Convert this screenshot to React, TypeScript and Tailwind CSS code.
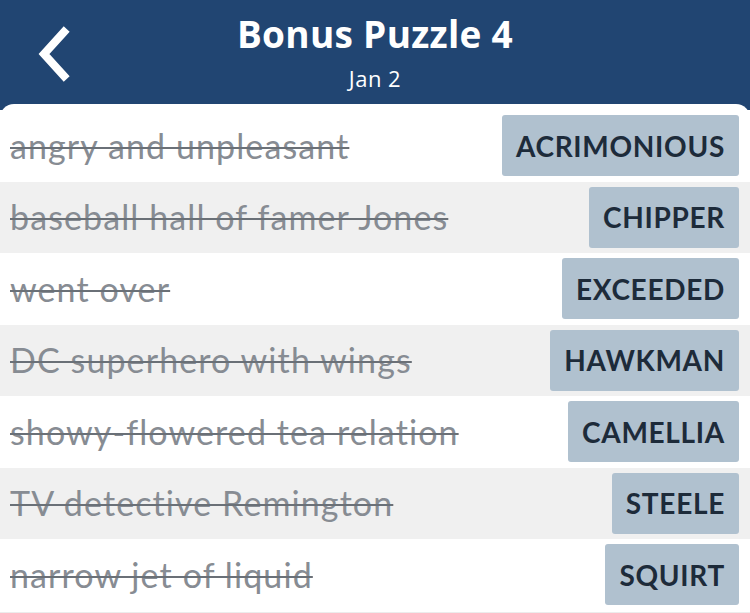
import React from 'react';

interface Clue {
  clue: string;
  answer: string;
}

const clues: Clue[] = [
  { clue: 'angry and unpleasant', answer: 'ACRIMONIOUS' },
  { clue: 'baseball hall of famer Jones', answer: 'CHIPPER' },
  { clue: 'went over', answer: 'EXCEEDED' },
  { clue: 'DC superhero with wings', answer: 'HAWKMAN' },
  { clue: 'showy-flowered tea relation', answer: 'CAMELLIA' },
  { clue: 'TV detective Remington', answer: 'STEELE' },
  { clue: 'narrow jet of liquid', answer: 'SQUIRT' },
];

export default function App() {
  return (
    <div className="w-[750px] h-[613px] overflow-hidden flex flex-col bg-[#214572] font-['Lato',sans-serif]">
      {/* Header */}
      <div className="relative h-[104px] shrink-0 flex flex-col items-center text-white font-['Open_Sans',sans-serif]">
        <button className="absolute left-[34px] top-[26px] w-[40px] h-[56px] flex items-center justify-center">
          <svg width="36" height="56" viewBox="0 0 36 56">
            <polyline points="28,6 8,28 28,50" fill="none" stroke="white" strokeWidth="8" strokeLinecap="square" />
          </svg>
        </button>
        <h1 className="mt-[12px] text-[37px] leading-[44px] font-bold tracking-[0.3px]">Bonus Puzzle 4</h1>
        <p className="mt-[8px] text-[22px] leading-[28px] tracking-[0.5px]">Jan 2</p>
      </div>

      {/* Clue list */}
      <div className="flex-1 bg-white rounded-t-[14px] pt-[6px] border-b border-[#ececec]">
        {clues.map((c, i) => (
          <div
            key={i}
            className={`flex items-center justify-between h-[71.5px] pl-[10px] pr-[11px] ${i % 2 === 1 ? 'bg-[#f0f0f0]' : 'bg-white'}`}
          >
            <span className="text-[34px] leading-none tracking-[1.1px] text-[#878c93] line-through decoration-[#6a7077] decoration-2">{c.clue}</span>
            <span className="h-[61px] flex items-center px-[14px] bg-[#b0c1cf] rounded-[3px] text-[28px] font-bold text-[#1d2b3a] tracking-[0.7px]">
              {c.answer}
            </span>
          </div>
        ))}
      </div>
    </div>
  );
}
